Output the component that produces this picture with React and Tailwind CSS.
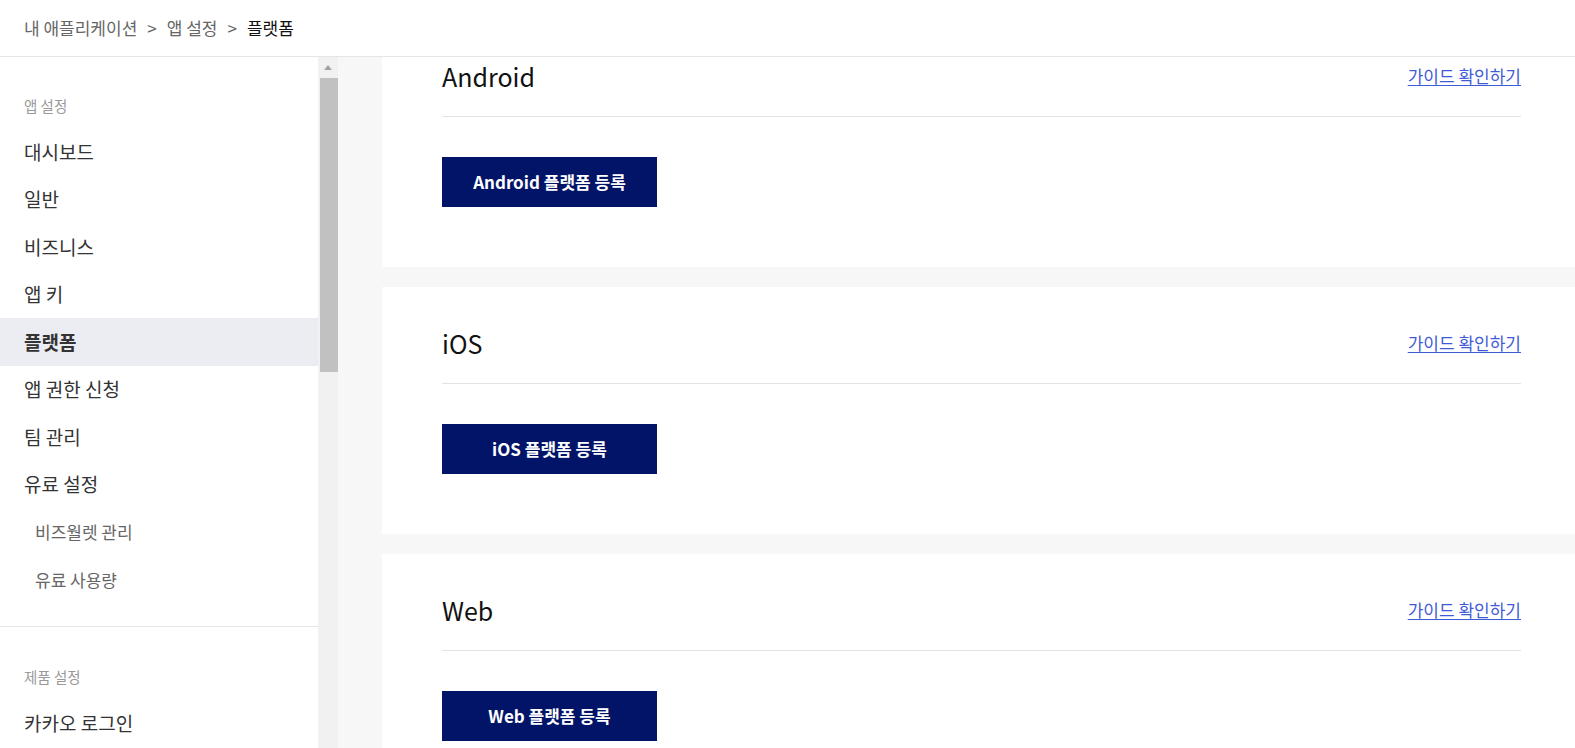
import { Fragment } from "react";

const font = { fontFamily: '"Noto Sans CJK KR", "Noto Sans", sans-serif' };

const appMenu = [
  { label: "대시보드" },
  { label: "일반" },
  { label: "비즈니스" },
  { label: "앱 키" },
  { label: "플랫폼", active: true },
  { label: "앱 권한 신청" },
  { label: "팀 관리" },
  { label: "유료 설정" },
  { label: "비즈월렛 관리", sub: true },
  { label: "유료 사용량", sub: true },
];

const platforms = ["Android", "iOS", "Web"];

const crumbs = ["내 애플리케이션", "앱 설정", "플랫폼"];

const MenuItem = ({ item }) => (
  <div
    className={
      "flex h-[47.5px] items-center " +
      (item.sub ? "pl-[35px] text-[17px] text-[#666]" : "pl-6 text-[19px] text-[#333]") +
      (item.active ? " bg-[#ecedf3] font-bold text-[#111]" : "")
    }
  >
    {item.label}
  </div>
);

const PlatformCard = ({ name, first }) => (
  <section className={"bg-white pl-[60px] pr-[54px] pt-[40px] pb-[60px] " + (first ? "-mt-[37px]" : "mt-5")}>
    <div className="flex items-center justify-between border-b border-[#e3e3e3] pb-[24px]">
      <h2 className="text-[25px] leading-8 text-[#111]">{name}</h2>
      <a href="#" className="text-[17px] text-[#3f5bd6] underline underline-offset-2">
        가이드 확인하기
      </a>
    </div>
    <button className="mt-10 flex h-[50px] w-[215px] items-center justify-center bg-[#011468] text-[17px] font-bold text-white">
      {name} 플랫폼 등록
    </button>
  </section>
);

export default function App() {
  return (
    <div className="flex h-[748px] flex-col overflow-hidden bg-white" style={font}>
      <header className="flex h-[57px] shrink-0 items-center border-b border-[#e5e5e5] px-6 pb-px text-[17px]">
        {crumbs.map((c, i) => (
          <Fragment key={c}>
            {i > 0 && <span className="mx-[10px] text-[#666]">&gt;</span>}
            <span className={i === crumbs.length - 1 ? "text-[#111]" : "text-[#666]"}>{c}</span>
          </Fragment>
        ))}
      </header>

      <div className="flex min-h-0 flex-1">
        <aside className="w-[318px] shrink-0 overflow-hidden">
          <p className="pt-[39px] pl-6 text-[14.5px] leading-5 text-[#999]">앱 설정</p>
          <nav className="mt-3 pb-[23px]">
            {appMenu.map((item) => (
              <MenuItem key={item.label} item={item} />
            ))}
          </nav>
          <div className="border-t border-[#e5e5e5]">
            <p className="pt-10 pl-6 text-[14.5px] leading-5 text-[#999]">제품 설정</p>
            <nav className="mt-3">
              <MenuItem item={{ label: "카카오 로그인" }} />
            </nav>
          </div>
        </aside>

        <div className="flex w-[20px] shrink-0 flex-col bg-[#f1f1f1]">
          <div className="flex h-[21px] items-center justify-center">
            <svg width="8" height="5" viewBox="0 0 8 5">
              <polygon points="0,5 4,0 8,5" fill="#a3a3a3" />
            </svg>
          </div>
          <div className="ml-[2px] h-[294px] bg-[#c1c1c1]" />
        </div>

        <main className="min-w-0 flex-1 overflow-hidden bg-[#f7f7f7] pl-[44px]">
          {platforms.map((p, i) => (
            <PlatformCard key={p} name={p} first={i === 0} />
          ))}
        </main>
      </div>
    </div>
  );
}
